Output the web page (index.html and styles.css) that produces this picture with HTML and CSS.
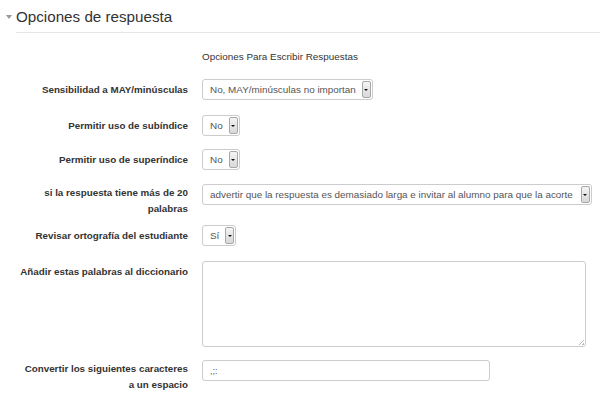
FILE: index.html
```html
<!DOCTYPE html>
<html lang="es">
<head>
<meta charset="utf-8">
<link rel="stylesheet" href="styles.css">
</head>
<body>
<fieldset class="section">
  <div class="legend"><span class="caret"></span><h2 class="title">Opciones de respuesta</h2></div>
  <div class="content">
    <div class="row row-static">
      <div class="label"></div>
      <div class="field static">Opciones Para Escribir Respuestas</div>
    </div>
    <div class="row row-a">
      <div class="label">Sensibilidad a MAY/minúsculas</div>
      <div class="field"><span class="select"><span class="val">No, MAY/minúsculas no importan</span><span class="arrow"></span></span></div>
    </div>
    <div class="row row-b">
      <div class="label">Permitir uso de subíndice</div>
      <div class="field"><span class="select"><span class="val">No</span><span class="arrow"></span></span></div>
    </div>
    <div class="row row-c">
      <div class="label">Permitir uso de superíndice</div>
      <div class="field"><span class="select"><span class="val">No</span><span class="arrow"></span></span></div>
    </div>
    <div class="row row-d">
      <div class="label">si la respuesta tiene más de 20 palabras</div>
      <div class="field"><span class="select wide"><span class="val">advertir que la respuesta es demasiado larga e invitar al alumno para que la acorte</span><span class="arrow"></span></span></div>
    </div>
    <div class="row row-e">
      <div class="label">Revisar ortografía del estudiante</div>
      <div class="field"><span class="select"><span class="val">Sí</span><span class="arrow"></span></span></div>
    </div>
    <div class="row row-f">
      <div class="label">Añadir estas palabras al diccionario</div>
      <div class="field"><div class="textarea"><span class="grip"></span></div></div>
    </div>
    <div class="row row-g">
      <div class="label">Convertir los siguientes caracteres a un espacio</div>
      <div class="field"><div class="input">,;:</div></div>
    </div>
  </div>
</fieldset>
</body>
</html>
```

FILE: styles.css
```css
html, body {
  margin: 0;
  padding: 0;
  background: #fff;
}
body {
  font-family: "Liberation Sans", Arial, Helvetica, sans-serif;
  color: #333;
  font-size: 9.9px;
  line-height: 16px;
}
.section {
  border: 0;
  margin: 0;
  padding: 0;
  min-width: 0;
}
.legend {
  display: flex;
  align-items: flex-start;
  padding: 7px 0 0 6px;
}
.caret {
  width: 0;
  height: 0;
  border-left: 3.5px solid transparent;
  border-right: 3.5px solid transparent;
  border-top: 4px solid #999;
  margin-right: 4px;
  margin-top: 8px;
}
.title {
  flex: 1;
  margin: 0;
  font-size: 15.2px;
  font-weight: normal;
  color: #333;
  line-height: 20px;
  padding-bottom: 5px;
  border-bottom: 1px solid #e5e5e5;
}
.content {
  padding-top: 16px;
}
.row {
  display: grid;
  grid-template-columns: 169px auto;
  column-gap: 14px;
  align-items: start;
  padding-left: 19px;
}
.label {
  text-align: right;
  font-weight: bold;
  font-size: 9.8px;
  color: #333;
  padding-top: 3px;
}
.static {
  color: #333;
}
.row-static { margin-bottom: 14px; }
.row-a { margin-bottom: 15px; }
.row-b { margin-bottom: 13px; }
.row-c { margin-bottom: 14px; }
.row-d { margin-bottom: 8px; }
.row-e { margin-bottom: 15px; }
.row-f { margin-bottom: 13px; }
.row-d .label, .row-g .label { padding-top: 1px; }
.field {
  min-width: 0;
}
.select {
  display: inline-flex;
  align-items: stretch;
  height: 21px;
  box-sizing: border-box;
  border: 1px solid #ccc;
  border-radius: 3px;
  background: #fff;
  color: #555;
  padding: 1px 1px 1px 0;
}
.select .val {
  display: flex;
  align-items: center;
  padding: 0 6px 0 7px;
  white-space: nowrap;
}
.select .arrow {
  width: 9px;
  box-sizing: border-box;
  border: 1px solid #a8a8a8;
  border-radius: 2px;
  background: linear-gradient(#f4f4f4, #d8d8d8);
  position: relative;
}
.select .arrow::after {
  content: "";
  position: absolute;
  left: 1.5px;
  top: 7px;
  border-left: 2px solid transparent;
  border-right: 2px solid transparent;
  border-top: 2px solid #111;
}
.select.wide .val { padding-right: 8px; }
.textarea {
  width: 384px;
  height: 86px;
  box-sizing: border-box;
  border: 1px solid #ccc;
  border-radius: 3px;
  background: #fff;
  position: relative;
}
.grip {
  position: absolute;
  right: 1px;
  bottom: 1px;
  width: 5px;
  height: 5px;
  background: linear-gradient(135deg, transparent 45%, #bbb 45%, #bbb 55%, transparent 55%, transparent 75%, #bbb 75%);
}
.input {
  width: 288px;
  height: 21px;
  box-sizing: border-box;
  border: 1px solid #ccc;
  border-radius: 3px;
  padding: 2px 6px 0 7px;
  color: #555;
  font-size: 9px;
}
```
